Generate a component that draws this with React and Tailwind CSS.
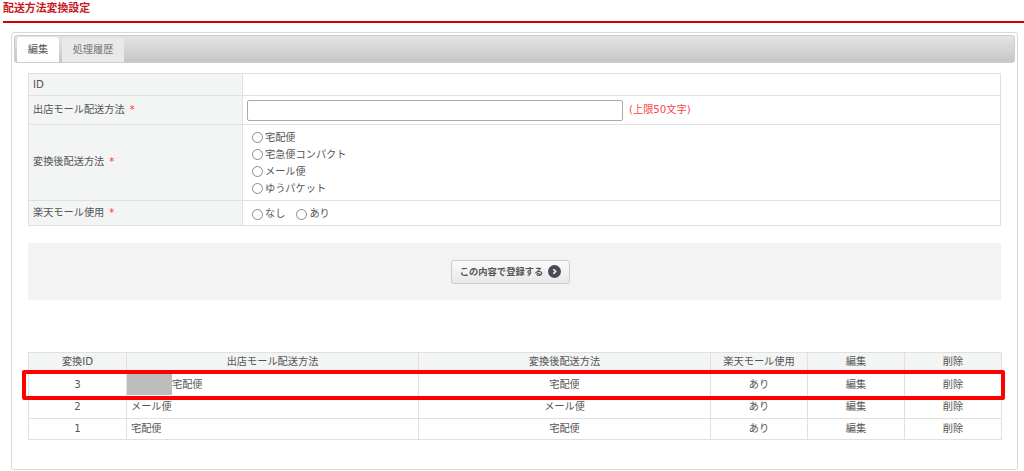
import React from "react";

const font = { fontFamily: '"DejaVu Sans", "Noto Sans CJK JP", sans-serif' };

const Required = () => <span className="ml-[5px] text-[10px] leading-[10px] text-[#f33]">*</span>;

const Radio = ({ label, className = "" }) => (
  <label className={`flex items-center ${className}`}>
    <span className="mr-[2px] h-[11px] w-[11px] rounded-full border border-[#888] bg-white" />
    {label}
  </label>
);

const rows = [
  { id: 3, mall: "宅配便", after: "宅配便", masked: true, height: "h-[22px]" },
  { id: 2, mall: "メール便", after: "メール便", height: "h-[22px]" },
  { id: 1, mall: "宅配便", after: "宅配便", height: "h-[21px]" },
];

const th = "border border-[#e0e0e0] bg-[#f3f4f4] pb-[1px] pl-[4px] text-left font-normal";
const td = "border border-[#e0e0e0] pb-[1px] text-center";
const listTh = "border border-[#e0e0e0] bg-[#f3f4f4] pb-[2px] text-center font-normal";

export default function App() {
  return (
    <div style={font} className="h-[471px] w-[1024px] overflow-hidden bg-white text-[10.2px] leading-[14px] text-[#555]">
      {/* Page title */}
      <h1 className="ml-[3px] h-[23px] border-b-[2px] border-[#d40000] pt-[1px] text-[10.9px] font-bold leading-[15px] text-[#c8161d]">
        配送方法変換設定
      </h1>

      {/* Panel */}
      <div className="ml-[11px] mt-[9px] h-[438px] w-[1007px] rounded-[3px] border border-[#d9d9d9] p-[2px]">
        {/* Tabs */}
        <div className="flex h-[28px] items-end gap-[3px] rounded-[3px] border border-[#ccc] bg-gradient-to-b from-[#e4e4e4] to-[#c6c6c6] pl-[2px]">
          <div className="flex h-[25px] w-[42px] items-center justify-center rounded-t-[3px] bg-white">編集</div>
          <div className="flex h-[24px] w-[62px] items-center justify-center rounded-t-[3px] bg-[#e9e9e9] text-[#777]">処理履歴</div>
        </div>

        {/* Edit form */}
        <table className="ml-[14px] mt-[10px] w-[973px] table-fixed border-collapse">
          <colgroup>
            <col className="w-[214px]" />
            <col />
          </colgroup>
          <tbody>
            <tr className="h-[22px]">
              <th className="border border-[#e0e0e0] bg-[#f3f4f4] pl-[4px] text-left font-normal">ID</th>
              <td className="border border-[#e0e0e0]" />
            </tr>
            <tr className="h-[29px]">
              <th className={th}>出店モール配送方法<Required /></th>
              <td className="border border-[#e0e0e0] pl-[4px]">
                <div className="flex items-center">
                  <input type="text" className="h-[21px] w-[376px] rounded-[2px] border border-[#aaa] bg-white" />
                  <span className="ml-[6px] text-[#f44]">(上限50文字)</span>
                </div>
              </td>
            </tr>
            <tr className="h-[76px]">
              <th className={th}>変換後配送方法<Required /></th>
              <td className="border border-[#e0e0e0] pl-[9px] pt-[1px]">
                <div className="flex flex-col gap-[3px]">
                  <Radio label="宅配便" />
                  <Radio label="宅急便コンパクト" />
                  <Radio label="メール便" />
                  <Radio label="ゆうパケット" />
                </div>
              </td>
            </tr>
            <tr className="h-[25px]">
              <th className={th}>楽天モール使用<Required /></th>
              <td className="border border-[#e0e0e0] pl-[9px] pt-[2px]">
                <div className="flex items-center gap-[11px]">
                  <Radio label="なし" />
                  <Radio label="あり" />
                </div>
              </td>
            </tr>
          </tbody>
        </table>

        {/* Submit area */}
        <div className="ml-[14px] mt-[17px] flex h-[57px] w-[973px] items-center bg-[#f3f3f3] pl-[423px]">
          <button
            type="button"
            className="flex h-[24px] w-[119px] items-center justify-center gap-[5px] rounded-[3px] border border-[#ccc] bg-gradient-to-b from-[#fafafa] to-[#e8e8e8] text-[9.3px] font-bold text-[#555]"
          >
            この内容で登録する
            <span className="flex h-[13px] w-[13px] items-center justify-center rounded-full bg-[#4a4a55]">
              <svg width="7" height="7" viewBox="0 0 6 6" fill="none" stroke="#fff" strokeWidth="1.3">
                <path d="M2 1l2 2-2 2" />
              </svg>
            </span>
          </button>
        </div>

        {/* Conversion list */}
        <div className="relative ml-[14px] mt-[52px] w-[973px]">
          <table className="w-full table-fixed border-collapse">
            <colgroup>
              <col className="w-[98px]" />
              <col className="w-[292px]" />
              <col className="w-[292px]" />
              <col className="w-[97px]" />
              <col className="w-[97px]" />
              <col className="w-[97px]" />
            </colgroup>
            <thead>
              <tr className="h-[21px]">
                <th className={listTh}>変換ID</th>
                <th className={listTh}>出店モール配送方法</th>
                <th className={listTh}>変換後配送方法</th>
                <th className={listTh}>楽天モール使用</th>
                <th className={listTh}>編集</th>
                <th className={listTh}>削除</th>
              </tr>
            </thead>
            <tbody>
              {rows.map((row) => (
                <tr key={row.id} className={row.height}>
                  <td className={td}>{row.id}</td>
                  <td className="border border-[#e0e0e0] pb-[1px] pl-[4px] text-left">
                    {row.masked ? (
                      <div className="-ml-[4px] flex items-center">
                        <span className="h-[21px] w-[45px] bg-[#bdbdbd]" />
                        {row.mall}
                      </div>
                    ) : (
                      row.mall
                    )}
                  </td>
                  <td className={td}>{row.after}</td>
                  <td className={td}>あり</td>
                  <td className={td}>編集</td>
                  <td className={td}>削除</td>
                </tr>
              ))}
            </tbody>
          </table>
          {/* Highlight drawn over the first row */}
          <div className="absolute left-[-6px] top-[18px] h-[30px] w-[983px] rounded-[2px] border-[4px] border-[#f00]" />
        </div>
      </div>
    </div>
  );
}
